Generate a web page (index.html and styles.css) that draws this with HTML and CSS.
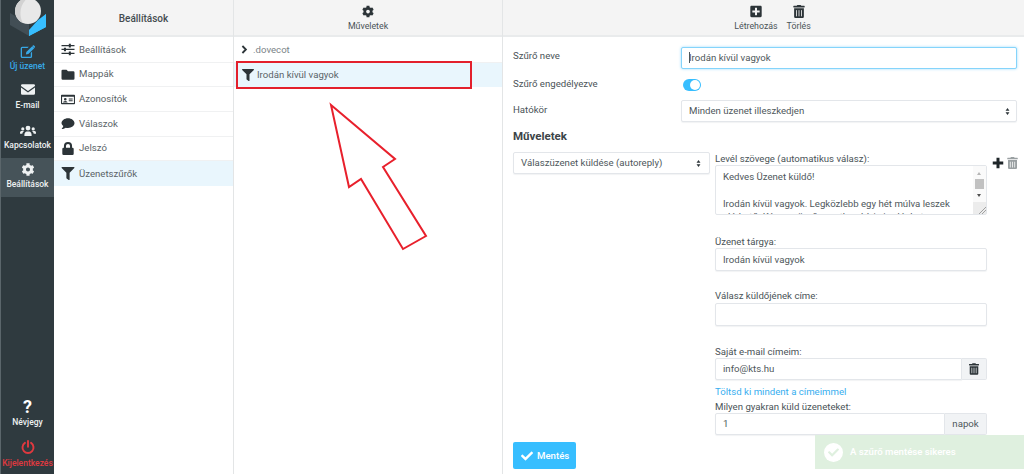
FILE: index.html
```html
<!DOCTYPE html>
<html lang="hu">
<head>
<meta charset="utf-8">
<title>Beállítások</title>
<link rel="stylesheet" href="styles.css">
</head>
<body>
<svg class="defs" width="0" height="0">
  <symbol id="cog" viewBox="0 0 512 512"><path d="M487.4 315.7l-42.6-24.6c4.3-23.2 4.3-47 0-70.2l42.6-24.6c4.9-2.8 7.1-8.6 5.5-14-11.1-35.6-30-67.8-54.7-94.6-3.8-4.1-10-5.1-14.8-2.3L380.8 110c-17.9-15.4-38.5-27.3-60.8-35.1V25.8c0-5.6-3.9-10.5-9.4-11.7-36.7-8.2-74.3-7.8-109.2 0-5.5 1.2-9.4 6.1-9.4 11.7V75c-22.2 7.9-42.8 19.8-60.8 35.1L88.7 85.5c-4.9-2.8-11-1.9-14.8 2.3-24.7 26.7-43.6 58.9-54.7 94.6-1.7 5.4.6 11.2 5.5 14L67.3 221c-4.3 23.2-4.3 47 0 70.2l-42.6 24.6c-4.9 2.8-7.1 8.6-5.5 14 11.1 35.6 30 67.8 54.7 94.6 3.8 4.1 10 5.1 14.8 2.3l42.6-24.6c17.9 15.4 38.5 27.3 60.8 35.1v49.2c0 5.6 3.9 10.5 9.4 11.7 36.7 8.2 74.3 7.8 109.2 0 5.5-1.2 9.4-6.1 9.4-11.7v-49.2c22.2-7.9 42.8-19.8 60.8-35.1l42.6 24.6c4.9 2.8 11 1.9 14.8-2.3 24.7-26.7 43.6-58.9 54.7-94.6 1.5-5.5-.7-11.3-5.6-14.1zM256 336c-44.1 0-80-35.9-80-80s35.9-80 80-80 80 35.9 80 80-35.9 80-80 80z"/></symbol>
  <symbol id="filter" viewBox="0 0 512 512"><path d="M487.976 0H24.028C2.71 0-8.047 25.866 7.058 40.971L192 225.941V432c0 7.831 3.821 15.17 10.237 19.662l80 55.98C298.02 518.69 320 507.493 320 487.98V225.941l184.947-184.97C520.021 25.896 509.338 0 487.976 0z"/></symbol>
  <symbol id="trash" viewBox="0 0 448 512"><path d="M32 464a48 48 0 0 0 48 48h288a48 48 0 0 0 48-48V128H32zm272-256a16 16 0 0 1 32 0v224a16 16 0 0 1-32 0zm-96 0a16 16 0 0 1 32 0v224a16 16 0 0 1-32 0zm-96 0a16 16 0 0 1 32 0v224a16 16 0 0 1-32 0zM432 32H312l-9.4-18.7A24 24 0 0 0 281.1 0H166.8a23.72 23.72 0 0 0-21.4 13.3L136 32H16A16 16 0 0 0 0 48v32a16 16 0 0 0 16 16h416a16 16 0 0 0 16-16V48a16 16 0 0 0-16-16z"/></symbol>
  <symbol id="plus-square" viewBox="0 0 448 512"><path d="M400 32H48C21.5 32 0 53.5 0 80v352c0 26.5 21.5 48 48 48h352c26.5 0 48-21.5 48-48V80c0-26.5-21.5-48-48-48zm-32 252c0 6.6-5.4 12-12 12h-92v92c0 6.6-5.4 12-12 12h-56c-6.6 0-12-5.4-12-12v-92H92c-6.6 0-12-5.4-12-12v-56c0-6.6 5.4-12 12-12h92v-92c0-6.6 5.4-12 12-12h56c6.6 0 12 5.4 12 12v92h92c6.6 0 12 5.4 12 12v56z"/></symbol>
  <symbol id="check" viewBox="0 0 512 512"><path d="M173.898 439.404l-166.4-166.4c-9.997-9.997-9.997-26.206 0-36.204l36.203-36.204c9.997-9.998 26.207-9.998 36.204 0L192 312.69 432.095 72.596c9.997-9.997 26.207-9.997 36.204 0l36.203 36.204c9.997 9.997 9.997 26.206 0 36.204l-294.4 294.401c-9.998 9.997-26.207 9.997-36.204-.001z"/></symbol>
  <symbol id="plus" viewBox="0 0 16 16"><path d="M6 1h4v5h5v4h-5v5H6v-5H1V6h5z"/></symbol>
  <symbol id="sliders" viewBox="0 0 16 16"><path d="M0 2.500h9V1h2.500v1.500H16V4h-4.500v1.500H9V4H0zM0 7.200h3V5.800h2.500v1.400H16v1.500H5.500v1.500H3V8.700H0zM0 12h9v-1.500h2.500V12H16v1.500h-4.500V15H9v-1.500H0z"/></symbol>
  <symbol id="folder" viewBox="0 0 16 16"><path d="M1.500 2h4.700l1.800 2h6.500A1.500 1.500 0 0 1 16 5.500v7.500a1.500 1.500 0 0 1-1.500 1.500h-13A1.500 1.500 0 0 1 0 13V3.500A1.500 1.500 0 0 1 1.500 2z"/></symbol>
  <symbol id="idcard" viewBox="0 0 18 14"><path fill-rule="evenodd" d="M1 1h16a1 1 0 0 1 1 1v10a1 1 0 0 1-1 1H1a1 1 0 0 1-1-1V2a1 1 0 0 1 1-1zm.4 2.600v8h15.200v-8zM5.500 5a1.700 1.700 0 1 1 0 3.400 1.700 1.700 0 0 1 0-3.400zM2.600 11c0-1.300 1.200-2.200 2.900-2.200s2.900.9 2.900 2.200zM10 5.600h5V7h-5zm0 2.400h5v1.400h-5z"/></symbol>
  <symbol id="comment" viewBox="0 0 16 16"><path d="M8 1.500c4.400 0 8 2.700 8 6s-3.600 6-8 6c-1 0-2-.1-2.900-.4C4.200 13.800 2.600 14.700.6 14.700c-.3 0-.4-.3-.2-.5.1-.1 1.500-1.600 1.800-3.100C.8 10 0 8.800 0 7.500c0-3.300 3.600-6 8-6z"/></symbol>
  <symbol id="lock" viewBox="0 0 14 16"><path fill-rule="evenodd" d="M12 7h.5A1.500 1.500 0 0 1 14 8.500v6a1.500 1.500 0 0 1-1.500 1.500h-11A1.500 1.500 0 0 1 0 14.500v-6A1.500 1.500 0 0 1 1.500 7H2V4.800a5 4.800 0 0 1 10 0zM4.500 7h5V4.800a2.500 2.400 0 0 0-5 0z"/></symbol>
  <symbol id="edit" viewBox="0 0 18 16"><path d="M2 2h8L8.400 3.600H2.300a.6.600 0 0 0-.7.7v9.400c0 .4.300.7.700.7h9.400c.4 0 .7-.3.700-.7V9.700L14 8v6a2 2 0 0 1-2 2H2a2 2 0 0 1-2-2V4a2 2 0 0 1 2-2zM14.200 1.400l2.500 2.500-7.300 7.300-3 .5.500-3z M15 .6c.4-.4 1-.4 1.400 0l1 1c.4.400.4 1 0 1.400l-.6.600-2.400-2.400z"/></symbol>
  <symbol id="mail" viewBox="0 0 16 12"><path d="M1.500 0h13A1.500 1.500 0 0 1 16 1.500v.4L8 7.600 0 1.900v-.4A1.500 1.500 0 0 1 1.500 0zM0 3.600l8 5.800 8-5.800v7A1.500 1.500 0 0 1 14.500 12h-13A1.500 1.500 0 0 1 0 10.500z"/></symbol>
  <symbol id="users" viewBox="0 0 20 14"><circle cx="10" cy="4" r="3"/><circle cx="3.500" cy="5" r="2"/><circle cx="16.500" cy="5" r="2"/><path d="M5.500 14v-2c0-2 1.500-3.800 3-3.800h3c1.500 0 3 1.800 3 3.800v2zM0 11V9.500C0 8.300.9 7.500 2 7.500h3c-1.200.8-1.900 2-2.200 3.500zM20 11V9.500c0-1.200-.9-2-2-2h-3c1.200.8 1.900 2 2.200 3.500z"/></symbol>
  <symbol id="power" viewBox="0 0 16 16"><path d="M4.500 3.300a6.300 6.300 0 1 0 7 0" fill="none" stroke="currentColor" stroke-width="2.200" stroke-linecap="round"/><path d="M8 1.200v6.500" fill="none" stroke="currentColor" stroke-width="2.200" stroke-linecap="round"/></symbol>
  <symbol id="chevron" viewBox="0 0 10 12"><path d="M2 1l5 5-5 5" fill="none" stroke="currentColor" stroke-width="2.600"/></symbol>
  <symbol id="updown" viewBox="0 0 6 10"><path d="M3 0l2.800 3.800H.2zM3 10L.2 6.200h5.600z"/></symbol>
</svg>

<div class="app">
  <nav class="rail">
    <svg class="logo" viewBox="0 0 53 36" aria-hidden="true">
      <path fill="#424e55" d="M9 13 28 24V36L9 25z"/>
      <path fill="#37beff" d="M28 33 45 14V27L28 36z"/>
      <circle cx="27" cy="11" r="13" fill="#e8e8e8"/>
      <path fill="#d2d2d2" d="M27 -2a13 13 0 0 0-5 25C18 17 18 4 27 -2z"/>
      <path fill="#37beff" d="M37 20 45 14V27L28 36V30z"/>
    </svg>
    <a class="rail-item rail-new"><svg class="rail-icon"><use href="#edit"/></svg><span>Új üzenet</span></a>
    <a class="rail-item"><svg class="rail-icon rail-icon-mail"><use href="#mail"/></svg><span>E-mail</span></a>
    <a class="rail-item"><svg class="rail-icon"><use href="#users"/></svg><span>Kapcsolatok</span></a>
    <a class="rail-item rail-active"><svg class="rail-icon"><use href="#cog"/></svg><span>Beállítások</span></a>
    <div class="rail-spacer"></div>
    <a class="rail-item"><b class="rail-glyph">?</b><span>Névjegy</span></a>
    <a class="rail-item rail-logout"><svg class="rail-icon"><use href="#power"/></svg><span>Kijelentkezés</span></a>
  </nav>

  <section class="col col-settings">
    <header class="head head-title">Beállítások</header>
    <ul class="list">
      <li class="row"><svg class="row-icon"><use href="#sliders"/></svg>Beállítások</li>
      <li class="row"><svg class="row-icon"><use href="#folder"/></svg>Mappák</li>
      <li class="row"><svg class="row-icon"><use href="#idcard"/></svg>Azonosítók</li>
      <li class="row"><svg class="row-icon"><use href="#comment"/></svg>Válaszok</li>
      <li class="row"><svg class="row-icon"><use href="#lock"/></svg>Jelszó</li>
      <li class="row row-on"><svg class="row-icon"><use href="#filter"/></svg>Üzenetszűrők</li>
    </ul>
  </section>

  <section class="col col-filters">
    <header class="head">
      <a class="tool"><svg class="tool-icon"><use href="#cog"/></svg><span>Műveletek</span></a>
    </header>
    <ul class="list">
      <li class="frow frow-set"><svg class="chev"><use href="#chevron"/></svg>.dovecot</li>
      <li class="frow frow-on"><svg class="frow-icon"><use href="#filter"/></svg>Irodán kívül vagyok</li>
    </ul>
    <div class="mark-box"></div>
    <svg class="mark-arrow" viewBox="0 0 97 146" aria-hidden="true">
      <path d="M0 0 L64 54 L52 62 L95 131 L72 144 L30 74 L18 82 Z" fill="#fff" stroke="#e8202c" stroke-width="2"/>
    </svg>
  </section>

  <section class="col col-form">
    <header class="head head-form">
      <a class="tool"><svg class="tool-icon"><use href="#plus-square"/></svg><span>Létrehozás</span></a>
      <a class="tool"><svg class="tool-icon"><use href="#trash"/></svg><span>Törlés</span></a>
    </header>
    <form class="form">
      <div class="field">
        <label class="flabel flabel-top">Szűrő neve</label>
        <div class="ctl ctl-focus"><i class="caret"></i>Irodán kívül vagyok</div>
      </div>
      <div class="field field-toggle">
        <label class="flabel">Szűrő engedélyezve</label>
        <span class="toggle"><i></i></span>
      </div>
      <div class="field">
        <label class="flabel flabel-mid">Hatókör</label>
        <div class="ctl ctl-select">Minden üzenet illeszkedjen<svg class="updown"><use href="#updown"/></svg></div>
      </div>
      <h2 class="section-title">Műveletek</h2>
      <div class="action">
        <div class="ctl ctl-select action-select">Válaszüzenet küldése (autoreply)<svg class="updown"><use href="#updown"/></svg></div>
        <div class="action-main">
          <label class="alabel">Levél szövege (automatikus válasz):</label>
          <div class="ta-wrap">
            <textarea class="ta" readonly>Kedves Üzenet küldő!

Irodán kívül vagyok. Legközlebb egy hét múlva leszek elérhető. Kérem sürgős esetben hívja irodánkat, köszönöm.

Üdvözlettel:</textarea>
            <div class="sb">
              <i class="sb-up"></i>
              <i class="sb-thumb"></i>
              <i class="sb-down"></i>
              <i class="sb-corner"></i>
            </div>
          </div>
          <label class="alabel alabel-subject">Üzenet tárgya:</label>
          <div class="ctl ctl-tall">Irodán kívül vagyok</div>
          <label class="alabel alabel-reply">Válasz küldőjének címe:</label>
          <div class="ctl ctl-tall"></div>
          <label class="alabel alabel-own">Saját e-mail címeim:</label>
          <div class="group">
            <div class="ctl group-input">info@kts.hu</div>
            <span class="addon"><svg class="addon-icon"><use href="#trash"/></svg></span>
          </div>
          <a class="fill-link">Töltsd ki mindent a címeimmel</a>
          <label class="alabel">Milyen gyakran küld üzeneteket:</label>
          <div class="group">
            <div class="ctl group-input">1</div>
            <span class="addon addon-text">napok</span>
          </div>
        </div>
        <div class="action-tools">
          <svg class="at-plus"><use href="#plus"/></svg>
          <svg class="at-trash"><use href="#trash"/></svg>
        </div>
      </div>
      <button type="button" class="save"><svg class="save-icon"><use href="#check"/></svg>Mentés</button>
    </form>
    <div class="toast">
      <span class="toast-badge"><svg class="toast-check"><use href="#check"/></svg></span>
      A szűrő mentése sikeres
    </div>
  </section>
</div>
</body>
</html>
```

FILE: styles.css
```css
* { box-sizing: border-box; }
html, body { margin: 0; height: 100%; overflow: hidden; }
body { font: 9.65px/1.3 Roboto, "Liberation Sans", sans-serif; color: #4a5357; background: #fff; }
.defs { position: absolute; }
ul { list-style: none; margin: 0; padding: 0; }
svg { fill: currentColor; display: block; }

.app { display: grid; grid-template-columns: 54px 180px 269px 1fr; height: 474px; }

.rail { display: flex; flex-direction: column; background: #2f3a3f; border-left: 1px solid #5b666b; }
.logo { width: 53px; height: 36px; margin-bottom: 3px; flex: none; }
.rail-item { height: 39.5px; flex: none; display: flex; flex-direction: column; align-items: center; justify-content: flex-end; padding-bottom: 7px; color: #eef1f2; font-size: 8.5px; line-height: 12px; font-weight: 500; white-space: nowrap; }
.rail-icon { width: 16px; height: 13px; margin-bottom: 2px; }
.rail-icon-mail { width: 14px; height: 11px; margin-bottom: 4px; }
.rail-new { color: #37a9e8; }
.rail-active { background: #465359; }
.rail-spacer { flex: 1; }
.rail-glyph { font-size: 18px; line-height: 18px; color: #fff; }
.rail-logout { color: #e0393f; height: 41px; padding-bottom: 5px; }
.rail-logout .rail-icon { height: 14px; margin-bottom: 3px; }
.rail-spacer + .rail-item { padding-bottom: 5px; }

.col { position: relative; min-width: 0; border-right: 1px solid #e3e5e6; }
.col-form { border-right: 0; }
.head { height: 37px; background: #f4f4f4; border-bottom: 2px solid #e9ebec; display: flex; justify-content: center; align-items: center; gap: 9px; color: #444c50; }
.head-title { font-size: 10px; font-weight: 500; padding-top: 1px; }
.head-form { padding-left: 18px; }
.tool { display: flex; flex-direction: column; align-items: center; font-size: 8.8px; line-height: 11px; color: #4b5357; padding-top: 1px; }
.tool-icon { width: 12px; height: 13px; margin-bottom: 3px; color: #2c3438; }

.list { padding-top: 1px; }
.row { height: 24.7px; display: flex; align-items: center; padding-left: 7px; color: #5a6367; border-bottom: 1px solid #f0f1f2; }
.row-on { background: #e9f6fd; border-bottom: 0; }
.row-icon { width: 14px; height: 13px; margin-right: 4px; color: #2c3438; flex: none; }

.frow { height: 24.7px; display: flex; align-items: center; color: #5a6367; }
.frow-set { padding-left: 7px; color: #7b8488; border-bottom: 1px solid #f0f1f2; }
.chev { width: 7px; height: 9px; margin-right: 5px; color: #2c3438; }
.frow-on { background: #e9f6fd; padding-left: 8px; }
.frow-icon { width: 12px; height: 12px; margin-right: 3px; color: #2c3438; }
.mark-box { position: absolute; left: 2px; top: 61px; width: 236px; height: 28px; border: 2px solid #e3202c; }
.mark-arrow { position: absolute; left: 97px; top: 105px; width: 97px; height: 146px; overflow: visible; }

.form { padding: 10px 7px 0 10px; }
.field { display: grid; grid-template-columns: 168px 1fr; align-items: center; height: 22px; }
.field-toggle { height: 31px; }
.flabel { color: #4a5357; }
.flabel-top { padding-bottom: 3px; }
.flabel-mid { padding-bottom: 1px; }
.ctl { height: 22px; border: 1px solid #e3e6ea; border-radius: 2px; line-height: 20px; padding-left: 7px; color: #4e575b; box-shadow: 0 1px 1px #f2f3f4; background: #fff; position: relative; white-space: nowrap; }
.ctl-tall { height: 23px; line-height: 21px; }
.ctl-focus { border-color: #85d4fb; box-shadow: 0 0 3px #9fdcfb; }
.caret { display: inline-block; width: 1px; height: 11px; margin-right: -1px; vertical-align: -2px; background: #4e575b; }
.ctl-select { padding-right: 16px; }
.updown { position: absolute; right: 6px; top: 7px; width: 5px; height: 7px; color: #2c3438; }
.action-select .updown { right: 8px; }
.toggle { display: block; width: 18px; height: 12px; margin-left: 2px; border-radius: 6px; background: #37beff; position: relative; }
.toggle i { position: absolute; right: 1px; top: 1px; width: 10px; height: 10px; border-radius: 50%; background: #fff; }
.section-title { margin: 0; font-size: 11.5px; font-weight: 700; line-height: 16px; color: #3c4448; padding-top: 6px; height: 30px; }
.action { display: grid; grid-template-columns: 197px 272px 30px; column-gap: 5px; align-items: start; }
.action-main { display: flex; flex-direction: column; min-width: 0; }
.alabel { line-height: 13px; color: #4a5357; }
.alabel-subject { margin-top: 20px; }
.alabel-reply { margin-top: 18px; height: 14px; }
.alabel-own { margin-top: 19px; }
.ta-wrap { position: relative; height: 50px; }
.ta { display: block; height: 50px; width: 100%; resize: none; border: 1px solid #e3e6ea; border-radius: 2px; padding: 4px 20px 0 7px; font: 9.65px/13.3px Roboto, "Liberation Sans", sans-serif; color: #4e575b; overflow: hidden; outline: 0; }
.sb { position: absolute; right: 1px; top: 1px; bottom: 1px; width: 13px; background: #fafafa; }
.sb-up, .sb-down { position: absolute; left: 4px; width: 0; height: 0; border-left: 2.5px solid transparent; border-right: 2.5px solid transparent; }
.sb-up { top: 6px; border-bottom: 3px solid #b5b5b5; }
.sb-down { top: 28px; border-top: 3px solid #505050; }
.sb-thumb { position: absolute; left: 2px; top: 13px; width: 9px; height: 10px; background: #c1c1c1; }
.sb-corner { position: absolute; left: 0; right: 0; bottom: 0; height: 12px; background: linear-gradient(135deg, #ececec 0 72%, #a0a0a0 72% 75%, #ececec 75% 84%, #a0a0a0 84% 87%, #ececec 87%); }
.group { display: flex; height: 22px; }
.group-input { flex: 1; border-radius: 2px 0 0 2px; }
.addon { width: 25px; border: 1px solid #e3e6ea; border-left: 0; background: #f1f3f5; display: flex; align-items: center; justify-content: center; border-radius: 0 2px 2px 0; }
.addon-text { width: 42px; color: #4e575b; }
.addon-icon { width: 10px; height: 12px; color: #2c3438; }
.fill-link { color: #37aeef; line-height: 14px; margin-top: 5px; margin-bottom: 1px; }
.action-tools { display: flex; gap: 3px; align-items: center; padding-top: 5px; }
.at-plus { width: 12px; height: 12px; color: #1e2528; }
.at-trash { width: 11px; height: 12px; color: #9aa0a2; }
.save { display: flex; align-items: center; gap: 4px; width: 63px; height: 27px; margin-top: 7px; padding: 0 0 0 8px; border: 0; border-radius: 2px; background: #37beff; color: #fff; font: 500 9.65px Roboto, "Liberation Sans", sans-serif; }
.save-icon { width: 12px; height: 12px; }
.toast { position: absolute; right: 0; top: 435px; width: 209px; height: 34px; background: #dff0df; color: #fff; font-weight: 500; display: flex; align-items: center; gap: 7px; padding-left: 9px; }
.toast-badge { width: 19px; height: 19px; border-radius: 50%; background: #fff; display: flex; align-items: center; justify-content: center; }
.toast-check { width: 11px; height: 11px; color: #dff0df; }
```
